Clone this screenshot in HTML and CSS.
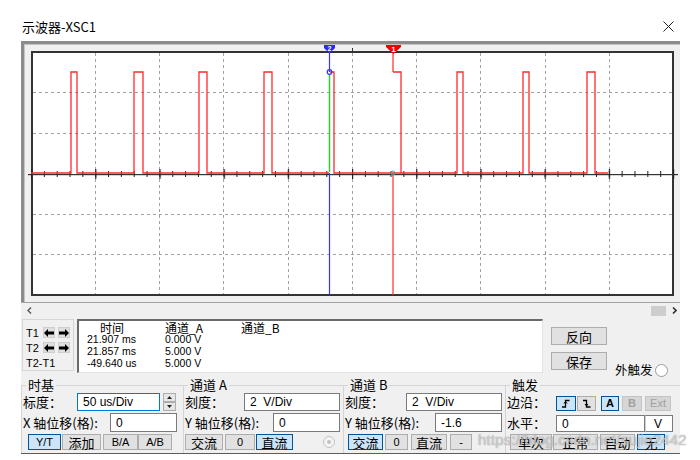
FILE: index.html
```html
<!DOCTYPE html>
<html lang="zh-CN">
<head>
<meta charset="utf-8">
<title>示波器-XSC1</title>
<link rel="stylesheet" href="styles.css">
</head>
<body>
<div class="titlebar">
  <span class="title">示波器-XSC1</span>
  <svg class="close" width="11" height="11" viewBox="0 0 11 11"><path d="M0.5 0.5 L10.5 10.5 M10.5 0.5 L0.5 10.5" stroke="#222" stroke-width="1" fill="none"/></svg>
</div>
<div class="dialog">
  <div class="scope">
    <div class="plot">
      <svg class="plotsvg" width="659" height="262" viewBox="0 0 659 262">
        <defs>
          <pattern id="minor" x="10" y="130" width="12.84" height="6" patternUnits="userSpaceOnUse">
            <rect x="0" y="0" width="1" height="6" fill="#222"/>
          </pattern>
          <pattern id="major" x="10" y="128" width="64.2" height="10" patternUnits="userSpaceOnUse">
            <rect x="0" y="0" width="1.2" height="10" fill="#222"/>
          </pattern>
        </defs>
        <rect x="0" y="0" width="659" height="3" fill="#8c8c8c"/>
        <rect x="0" y="3" width="659" height="1" fill="#c4c4c4"/>
        <rect x="0" y="0" width="3" height="262" fill="#8c8c8c"/>
        <rect x="3" y="3" width="1" height="259" fill="#c4c4c4"/>
        <rect x="0" y="261" width="659" height="1" fill="#a3a3a3"/>
        <rect x="11" y="11" width="641" height="243" fill="#ffffff" stroke="#333333" stroke-width="2"/>
        <path d="M74.5 12 V253 M138.5 12 V253 M202.5 12 V253 M267.5 12 V253 M331.5 12 V253 M395.5 12 V253 M459.5 12 V253 M524.5 12 V253 M588.5 12 V253 M12 51.5 H651 M12 92.5 H651 M12 173.5 H651 M12 213.5 H651" stroke="#a2a2a2" stroke-width="1" stroke-dasharray="3,3" fill="none"/>
        <path d="M331.5 7 V11" stroke="#333" stroke-width="1"/>
        <rect x="7" y="133" width="650" height="1.2" fill="#333"/>
        <rect x="7" y="130" width="650" height="6" fill="url(#minor)"/>
        <rect x="7" y="128" width="650" height="10" fill="url(#major)"/>
        <path d="M10 132 H50 V31 H56 V132 H113 V31 H122 V132 H178 V31 H186 V132 H243 V31 H251 V132 H308 M309 31 H313 V132 H436 V31 H442 V132 H502 V31 H508 V132 H566 V31 H574 V132 H587" fill="none" stroke="#ff2a2a" stroke-width="1.3"/>
        <path d="M372 31 H380 V132" fill="none" stroke="#ff2a2a" stroke-width="1.3"/>
        <path d="M372 12 V31 M372 132 V254" fill="none" stroke="#ff2a2a" stroke-width="1.2"/>
        <path d="M308.5 12 V31 M308.5 132 V254" stroke="#3535ff" stroke-width="1.2" fill="none"/>
        <path d="M308.5 33 V131" stroke="#33cc33" stroke-width="1.5" fill="none"/>
        <circle cx="308.5" cy="31" r="2.3" fill="none" stroke="#3535ff" stroke-width="1.2"/>
        <circle cx="372" cy="132" r="2" fill="none" stroke="#3aa6a6" stroke-width="1"/>
        <polygon points="303,4 314,4 314,7 308.5,12.5 303,7" fill="#2a2aff"/>
        <text x="308.5" y="10" font-size="7" font-family="Liberation Sans, sans-serif" font-weight="bold" fill="#fff" text-anchor="middle">2</text>
        <polygon points="365,4 380,4 380,6 372.5,13 365,6" fill="#ee0000"/>
        <text x="372.5" y="10.5" font-size="8" font-family="Liberation Sans, sans-serif" font-weight="bold" fill="#fff" text-anchor="middle">1</text>
      </svg>
    </div>
  </div>
  <div class="hscroll">
    <svg class="chev chev-l" width="5" height="7" viewBox="0 0 5 7"><path d="M4 0.5 L1 3.5 L4 6.5" fill="none" stroke="#555" stroke-width="1.4"/></svg>
    <span class="thumb"></span>
    <svg class="chev chev-r" width="5" height="7" viewBox="0 0 5 7"><path d="M1 0.5 L4 3.5 L1 6.5" fill="none" stroke="#333" stroke-width="1.6"/></svg>
  </div>
  <div class="meas">
    <div class="tbox">
      <div class="trow"><span class="tl">T1</span>
        <span class="arr"><svg width="10" height="8" viewBox="0 0 10 8"><polygon points="0,4 4,0 4,2.5 10,2.5 10,5.5 4,5.5 4,8" fill="#000"/></svg></span>
        <span class="arr"><svg width="10" height="8" viewBox="0 0 10 8"><polygon points="10,4 6,0 6,2.5 0,2.5 0,5.5 6,5.5 6,8" fill="#000"/></svg></span>
      </div>
      <div class="trow"><span class="tl">T2</span>
        <span class="arr"><svg width="10" height="8" viewBox="0 0 10 8"><polygon points="0,4 4,0 4,2.5 10,2.5 10,5.5 4,5.5 4,8" fill="#000"/></svg></span>
        <span class="arr"><svg width="10" height="8" viewBox="0 0 10 8"><polygon points="10,4 6,0 6,2.5 0,2.5 0,5.5 6,5.5 6,8" fill="#000"/></svg></span>
      </div>
      <div class="trow"><span class="tl">T2-T1</span></div>
    </div>
    <div class="data">
      <div class="dgrid">
        <span class="hd hd1">时间</span><span class="hd">通道_A</span><span class="hd">通道_B</span>
        <span>21.907 ms</span><span>0.000 V</span><span></span>
        <span>21.857 ms</span><span>5.000 V</span><span></span>
        <span>-49.640 us</span><span>5.000 V</span><span></span>
      </div>
    </div>
    <div class="btncol">
      <span class="btn big">反向</span>
      <span class="btn big">保存</span>
    </div>
    <div class="ext"><span class="cj">外触发</span><span class="radio"></span></div>
  </div>
  <div class="controls">
    <fieldset class="g g1">
      <legend>时基</legend>
      <div class="row r1"><span class="lbl l1a">标度：</span><span class="inp focus i1a">50 us/Div</span>
        <span class="spin"><span class="sp"><svg width="5" height="3" viewBox="0 0 5 3"><polygon points="0,3 2.5,0 5,3" fill="#222"/></svg></span><span class="sp"><svg width="5" height="3" viewBox="0 0 5 3"><polygon points="0,0 2.5,3 5,0" fill="#222"/></svg></span></span>
      </div>
      <div class="row r2"><span class="lbl l1b">X 轴位移(格):</span><span class="inp i67">0</span></div>
      <div class="row r3 b1">
        <span class="btn on w33">Y/T</span><span class="btn cj w39 ml1">添加</span><span class="btn w35 ml2">B/A</span><span class="btn w34">A/B</span>
      </div>
    </fieldset>
    <fieldset class="g g2">
      <legend>通道 A</legend>
      <div class="row r1"><span class="lbl l2a">刻度：</span><span class="inp i96">2&nbsp;&nbsp;V/Div</span></div>
      <div class="row r2"><span class="lbl l2b">Y 轴位移(格):</span><span class="inp i67">0</span></div>
      <div class="row r3">
        <span class="btn cj w38">交流</span><span class="btn w30 ml2">0</span><span class="btn on cj w37 ml1">直流</span>
        <span class="dradio"></span>
      </div>
    </fieldset>
    <fieldset class="g g3">
      <legend>通道 B</legend>
      <div class="row r1"><span class="lbl l3a">刻度：</span><span class="inp i96">2&nbsp;&nbsp;V/Div</span></div>
      <div class="row r2"><span class="lbl l3b">Y 轴位移(格):</span><span class="inp i67">-1.6</span></div>
      <div class="row r3 b3">
        <span class="btn on cj w35">交流</span><span class="btn w23 ml2">0</span><span class="btn cj w36 ml3">直流</span><span class="btn w22 ml3">-</span>
      </div>
    </fieldset>
    <fieldset class="g g4">
      <legend>触发</legend>
      <div class="row r1"><span class="lbl l4">边沿：</span>
        <span class="edge">
          <span class="btn on w20"><svg width="10" height="9" viewBox="0 0 10 9"><path d="M1 8 H4.5 V1.5 H8.5" fill="none" stroke="#000" stroke-width="1.3"/><path d="M3 4.5 L4.5 2.5 L6 4.5" fill="none" stroke="#000" stroke-width="1"/></svg></span>
          <span class="btn w19 ml1"><svg width="10" height="9" viewBox="0 0 10 9"><path d="M1 1.5 H4.5 V8 H8.5" fill="none" stroke="#000" stroke-width="1.3"/><path d="M3 5 L4.5 7 L6 5" fill="none" stroke="#000" stroke-width="1"/></svg></span>
          <span class="btn on w18 ml5 bold">A</span>
          <span class="btn dis w20 ml3 bold">B</span>
          <span class="btn dis w26 ml3">Ext</span>
        </span>
      </div>
      <div class="row r2 lvl"><span class="lbl l4">水平：</span><span class="inp i89">0</span><span class="inp i28">V</span></div>
      <div class="row r3 b4">
        <span class="btn cj w42">单次</span><span class="btn cj w45 ml1">正常</span><span class="btn cj w35 ml2">自动</span><span class="btn on cj w28 ml2">无</span>
      </div>
    </fieldset>
  </div>
</div>
<div class="watermark">https://blog.csdn.net/sujie2442</div>
</body>
</html>
```
FILE: styles.css
```css
* { box-sizing: border-box; }
html, body { margin: 0; padding: 0; }
body {
  width: 700px;
  height: 460px;
  overflow: hidden;
  position: relative;
  background: #fff;
  color: #000;
  font-family: "Liberation Sans", "Noto Sans CJK SC", sans-serif;
}
.cj { font-family: "Noto Sans CJK SC", sans-serif; font-size: 13px; }

.titlebar {
  height: 41px;
  display: flex;
  align-items: center;
  justify-content: space-between;
  padding: 12px 26px 0 22px;
}
.title { font-family: "Noto Sans CJK SC", sans-serif; font-size: 13px; line-height: 16px; }
.close { display: block; }

.dialog {
  margin-left: 21px;
  width: 659px;
  background: #f0f0f0;
  border-bottom: 1px solid #5c5c5c;
}
.scope { height: 262px; }
.plot { height: 262px; }
.plotsvg { display: block; }

.hscroll {
  height: 15px;
  display: flex;
  align-items: center;
}
.chev { display: block; }
.chev-l { margin-left: 6px; }
.thumb {
  margin-left: auto;
  width: 15px;
  height: 10px;
  background: #cdcdcd;
}
.chev-r { margin-left: 6px; margin-right: 3px; }

.meas {
  height: 59px;
  display: flex;
  align-items: flex-start;
  padding-top: 1px;
}
.tbox {
  margin-left: 1px;
  width: 52px;
  height: 52px;
  border: 1px solid #d6d6d6;
  padding: 6px 0 0 3px;
  display: flex;
  flex-direction: column;
  gap: 2px;
}
.trow {
  height: 14px;
  display: flex;
  align-items: center;
  font-size: 11px;
}
.tl { width: 19px; white-space: nowrap; }
.arr {
  width: 12px;
  height: 11px;
  background: #dedede;
  border: 1px solid #cfcfcf;
  display: flex;
  align-items: center;
  justify-content: center;
  margin-right: 3px;
}
.arr svg { display: block; }

.data {
  margin-left: 3px;
  width: 466px;
  height: 54px;
  background: #fff;
  border-top: 2px solid #6a6a6a;
  border-left: 2px solid #6a6a6a;
  border-right: 1px solid #e2e2e2;
  border-bottom: 1px solid #e2e2e2;
  padding-left: 8px;
}
.dgrid {
  display: grid;
  grid-template-columns: 78px 76px 80px;
  grid-auto-rows: 12px;
  font-size: 10.5px;
  line-height: 12px;
  white-space: nowrap;
}
.hd {
  font-family: "Noto Sans CJK SC", sans-serif;
  font-size: 12px;
  line-height: 13px;
  height: 13px;
}
.hd1 { padding-left: 13px; }

.btncol {
  margin-left: 8px;
  padding-top: 8px;
  display: flex;
  flex-direction: column;
  gap: 7px;
}
.btn {
  display: flex;
  align-items: center;
  justify-content: center;
  height: 100%;
  background: #e1e1e1;
  border: 1px solid #adadad;
  font-size: 11px;
  line-height: 1;
  color: #000;
  white-space: nowrap;
}
.btn.cj { font-size: 13px; }
.btn.big {
  width: 56px;
  height: 18px;
  font-family: "Noto Sans CJK SC", sans-serif;
  font-size: 13px;
}
.btn.on { background: #cce4f7; border-color: #005499; }
.btn.dis { background: #d6d6d6; border-color: #c4c4c4; color: #a0a0a0; }
.bold { font-weight: bold; }

.ext {
  margin-left: 8px;
  margin-top: 43px;
  display: flex;
  align-items: center;
  gap: 2px;
  line-height: 16px;
}
.ext .cj { font-size: 12.5px; }
.radio {
  width: 13px;
  height: 13px;
  border-radius: 50%;
  border: 1px solid #9a9a9a;
  background: #fff;
}

.controls { display: flex; height: 76px; }
.g {
  margin: 0;
  padding: 0 0 0 1px;
  min-width: 0;
  height: 76px;
  border: 0;
  border-top: 1px solid #d4d4d4;
  border-left: 1px solid #d4d4d4;
}
.g1 { width: 162px; }
.g2 { width: 160px; }
.g3 { width: 162px; }
.g4 { width: 175px; }
legend {
  font-family: "Noto Sans CJK SC", sans-serif;
  font-size: 13px;
  line-height: 16px;
  padding: 0 2px;
  margin-left: 3px;
}
.row { display: flex; align-items: center; }
.r1 { height: 18px; }
.r2 { height: 19px; margin-top: 2px; }
.r3 { height: 16px; margin-top: 2px; }
.lbl {
  font-family: "Noto Sans CJK SC", sans-serif;
  font-size: 13px;
  line-height: 16px;
  white-space: nowrap;
  flex: none;
}
.l1a { width: 54px; }
.l1b { width: 87px; }
.l2a { width: 59px; }
.l2b { width: 88px; }
.l3a { width: 61px; }
.l3b { width: 90px; }
.l4 { width: 49px; }

.inp {
  height: 100%;
  background: #fff;
  border: 1px solid #7a7a7a;
  font-size: 12px;
  line-height: 16px;
  padding-left: 5px;
  display: flex;
  align-items: center;
  white-space: nowrap;
  flex: none;
}
.inp.focus { border-color: #0078d7; }
.i1a { width: 83px; }
.i67 { width: 67px; }
.i96 { width: 96px; }
.i89 { width: 89px; }
.i28 { width: 28px; border-left-color: #d0d0d0; padding-left: 8px; }
.lvl .inp { height: 17px; align-self: flex-end; }

.spin {
  margin-left: 3px;
  width: 13px;
  height: 18px;
  display: flex;
  flex-direction: column;
}
.sp {
  height: 9px;
  background: #e6e6e6;
  border: 1px solid #adadad;
  display: flex;
  align-items: center;
  justify-content: center;
}
.sp svg { display: block; }

.b1 { padding-left: 5px; }
.b3 { padding-left: 3px; }
.b4 { padding-left: 3px; }
.w18 { width: 18px; } .w19 { width: 19px; } .w20 { width: 20px; } .w22 { width: 22px; }
.w23 { width: 23px; } .w26 { width: 26px; } .w28 { width: 28px; } .w30 { width: 30px; }
.w33 { width: 33px; } .w34 { width: 34px; } .w35 { width: 35px; } .w36 { width: 36px; }
.w37 { width: 37px; } .w38 { width: 38px; } .w39 { width: 39px; } .w42 { width: 42px; }
.w45 { width: 45px; }
.ml1 { margin-left: 1px; } .ml2 { margin-left: 2px; } .ml3 { margin-left: 3px; } .ml5 { margin-left: 5px; }

.dradio {
  margin-left: 30px;
  width: 12px;
  height: 12px;
  border-radius: 50%;
  border: 1px solid #c2c2c2;
  background: #f4f4f4;
  display: flex;
  align-items: center;
  justify-content: center;
}
.dradio::after {
  content: "";
  width: 4px;
  height: 4px;
  border-radius: 50%;
  background: #c2c2c2;
}

.edge {
  display: flex;
  height: 15px;
  align-self: flex-end;
}

.watermark {
  position: absolute;
  left: 478px;
  top: 431px;
  font-family: "Liberation Sans", sans-serif;
  font-size: 15px;
  letter-spacing: 0.2px;
  color: rgba(255, 255, 255, 0.5);
  text-shadow: 0 0 1px rgba(110, 110, 110, 0.5), 0 0 1px rgba(110, 110, 110, 0.5);
  pointer-events: none;
  white-space: nowrap;
}
```
